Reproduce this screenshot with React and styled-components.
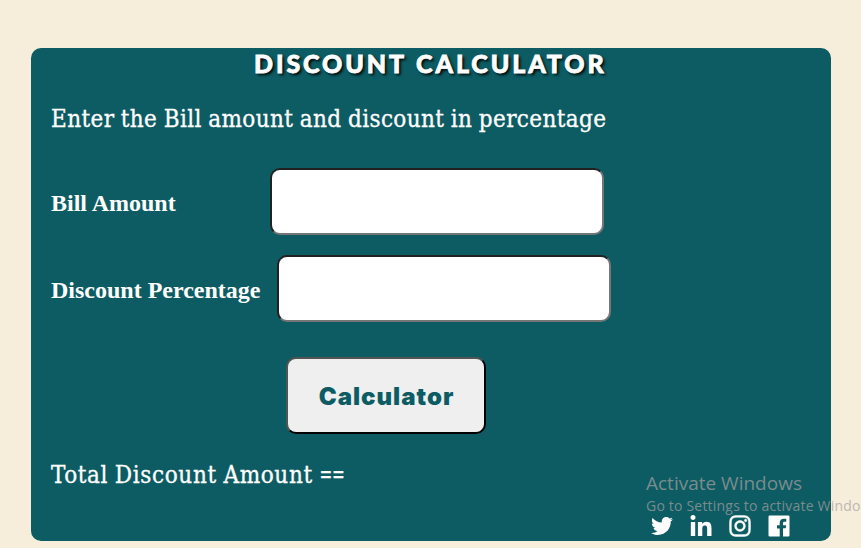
import React from "react";
import styled, { createGlobalStyle } from "styled-components";
import { BiLogoFacebookSquare } from "react-icons/bi";
import { FaTwitter, FaLinkedinIn, FaInstagram } from "react-icons/fa";

const GlobalStyle = createGlobalStyle`
  * { box-sizing: border-box; }
  body {
    margin: 0;
    background: #f6eddb;
    overflow: hidden;
  }
`;

const Page = styled.div`
  height: 548px;
  padding: 48px 30px 0 31px;
`;

const Card = styled.main`
  display: flex;
  flex-direction: column;
  height: 493px;
  padding: 0 20px;
  border-radius: 10px;
  background: #0d5c63;
  color: #fff;
`;

const Title = styled.h1`
  margin: 0 0 0 203px;
  height: 34px;
  font: 900 25px/31px Lato, sans-serif;
  letter-spacing: 2.9px;
  word-spacing: 1px;
  text-transform: uppercase;
  white-space: nowrap;
  -webkit-text-stroke: 0.8px #fff;
  text-shadow: 2px 2px 3px #000;
`;

const Message = styled.p`
  margin: 0;
  height: ${(p) => p.$height}px;
  padding-top: ${(p) => p.$top}px;
  font: 24px/32px "DejaVu Serif Condensed", "DejaVu Serif", serif;
  font-stretch: condensed;
  letter-spacing: ${(p) => p.$spacing}px;
  word-spacing: -0.8px;
  white-space: nowrap;
  -webkit-text-stroke: 0.3px #fff;
`;

const Equals = styled.span`
  font: 400 23px Roboto, sans-serif;
  letter-spacing: 0;
`;

const Field = styled.label`
  display: flex;
  align-items: center;
  gap: ${(p) => p.$gap}px;
  height: 67px;
  margin-bottom: 20px;
`;

const FieldName = styled.span`
  width: ${(p) => p.$width}px;
  padding-top: 3px;
  font: bold 24px/28px "Liberation Serif", serif;
  white-space: nowrap;
`;

const Input = styled.input`
  width: 334px;
  height: 67px;
  padding: 10px;
  border: 2px inset #767676;
  border-radius: 10px;
  background: #fff;
  font: 24px "Liberation Sans", sans-serif;
  outline: none;
`;

const Button = styled.button`
  width: 200px;
  height: 77px;
  margin: 15px 0 0 235px;
  padding: 2px 0 0 1px;
  border: 2px outset #000;
  border-radius: 10px;
  background: #efefef;
  color: #0d5c63;
  font: 900 24px/30px Inter, sans-serif;
  letter-spacing: 1px;
`;

const Socials = styled.nav`
  display: flex;
  gap: 11px;
  margin-left: 597px;
`;

const SocialLink = styled.a`
  display: flex;
  align-items: center;
  justify-content: center;
  width: 28px;
  height: 28px;
  padding-top: ${(p) => p.$drop || 0}px;
  color: #fff;
  font-size: ${(p) => p.$size}px;

  svg {
    flex: none;
    overflow: visible;
    stroke-width: ${(p) => p.$stroke || 0};
  }
`;

const Watermark = styled.aside`
  position: absolute;
  top: 471px;
  left: 646px;
  width: 215px;
  color: rgba(166, 160, 160, 0.72);
  white-space: nowrap;
  pointer-events: none;
  font-family: "Open Sans", "Noto Sans", sans-serif;
`;

const WatermarkTitle = styled.div`
  font-size: 19px;
  line-height: 25px;
`;

const WatermarkText = styled.div`
  font-size: 14px;
  line-height: 20px;
  letter-spacing: 0.2px;
`;

const socials = [
  { name: "Twitter", Icon: FaTwitter, size: 22 },
  { name: "LinkedIn", Icon: FaLinkedinIn, size: 24, drop: 2 },
  { name: "Instagram", Icon: FaInstagram, size: 24, stroke: 10 },
  { name: "Facebook", Icon: BiLogoFacebookSquare, size: 28 },
];

export default function App() {
  return (
    <Page>
      <GlobalStyle />
      <Card>
        <Title>Discount Calculator</Title>
        <Message $height={86} $top={21} $spacing={0.38}>
          Enter the Bill amount and discount in percentage
        </Message>
        <Field $gap={0}>
          <FieldName $width={219}>Bill Amount</FieldName>
          <Input aria-label="Bill Amount" />
        </Field>
        <Field $gap={16}>
          <FieldName $width={210}>Discount Percentage</FieldName>
          <Input aria-label="Discount Percentage" />
        </Field>
        <Button type="button">Calculator</Button>
        <Message $height={78} $top={25} $spacing={0.63}>
          Total Discount Amount <Equals>==</Equals>
        </Message>
        <Socials>
          {socials.map(({ name, Icon, size, stroke, drop }) => (
            <SocialLink
              key={name}
              aria-label={name}
              $size={size}
              $stroke={stroke}
              $drop={drop}
            >
              <Icon />
            </SocialLink>
          ))}
        </Socials>
      </Card>
      <Watermark>
        <WatermarkTitle>Activate Windows</WatermarkTitle>
        <WatermarkText>Go to Settings to activate Windo</WatermarkText>
      </Watermark>
    </Page>
  );
}
